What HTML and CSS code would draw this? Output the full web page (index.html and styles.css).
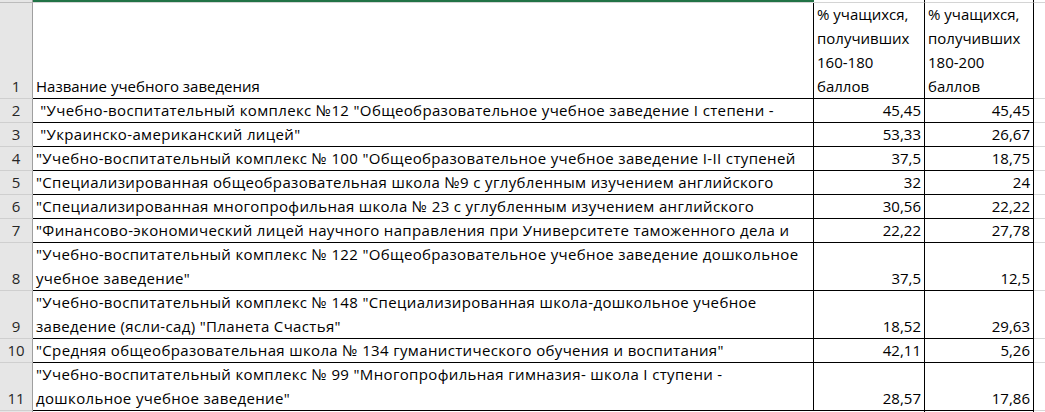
FILE: index.html
```html
<!DOCTYPE html>
<html lang="ru">
<head>
<meta charset="utf-8">
<title>Таблица</title>
<link rel="stylesheet" href="styles.css">
</head>
<body>
<div class="sheet">
  <div class="rh top"></div>
  <div class="top sel"></div>
  <div class="top col"></div>
  <div class="top col"></div>
  <div class="top extra"></div>

  <div class="rh">1</div>
  <div class="c txt"><span>Название учебного заведения</span></div>
  <div class="c txt"><span>% учащихся,</span><span>получивших</span><span>160-180</span><span>баллов</span></div>
  <div class="c txt"><span>% учащихся,</span><span>получивших</span><span>180-200</span><span>баллов</span></div>
  <div class="x"></div>

  <div class="rh">2</div>
  <div class="c txt long"><span> "Учебно-воспитательный комплекс №12 "Общеобразовательное учебное заведение І степени -</span></div>
  <div class="c num">45,45</div>
  <div class="c num">45,45</div>
  <div class="x"></div>

  <div class="rh">3</div>
  <div class="c txt long"><span> "Украинско-американский лицей"</span></div>
  <div class="c num">53,33</div>
  <div class="c num">26,67</div>
  <div class="x"></div>

  <div class="rh">4</div>
  <div class="c txt long"><span>"Учебно-воспитательный комплекс № 100 "Общеобразовательное учебное заведение І-ІІ ступеней</span></div>
  <div class="c num">37,5</div>
  <div class="c num">18,75</div>
  <div class="x"></div>

  <div class="rh">5</div>
  <div class="c txt long"><span>"Специализированная общеобразовательная школа №9 с углубленным изучением английского</span></div>
  <div class="c num">32</div>
  <div class="c num">24</div>
  <div class="x"></div>

  <div class="rh">6</div>
  <div class="c txt long"><span>"Специализированная многопрофильная школа № 23 с углубленным изучением английского</span></div>
  <div class="c num">30,56</div>
  <div class="c num">22,22</div>
  <div class="x"></div>

  <div class="rh">7</div>
  <div class="c txt long"><span>"Финансово-экономический лицей научного направления при Университете таможенного дела и</span></div>
  <div class="c num">22,22</div>
  <div class="c num">27,78</div>
  <div class="x"></div>

  <div class="rh">8</div>
  <div class="c txt long"><span>"Учебно-воспитательный комплекс № 122 "Общеобразовательное учебное заведение дошкольное</span><span>учебное заведение"</span></div>
  <div class="c num">37,5</div>
  <div class="c num">12,5</div>
  <div class="x"></div>

  <div class="rh">9</div>
  <div class="c txt long"><span>"Учебно-воспитательный комплекс № 148 "Специализированная школа-дошкольное учебное</span><span>заведение (ясли-сад) "Планета Счастья"</span></div>
  <div class="c num">18,52</div>
  <div class="c num">29,63</div>
  <div class="x"></div>

  <div class="rh">10</div>
  <div class="c txt long"><span>"Средняя общеобразовательная школа № 134 гуманистического обучения и воспитания"</span></div>
  <div class="c num">42,11</div>
  <div class="c num">5,26</div>
  <div class="x"></div>

  <div class="rh">11</div>
  <div class="c txt long"><span>"Учебно-воспитательный комплекс № 99 "Многопрофильная гимназия- школа І ступени -</span><span>дошкольное учебное заведение"</span></div>
  <div class="c num">28,57</div>
  <div class="c num">17,86</div>
  <div class="x"></div>

  <div class="rh end"></div>
  <div class="end"></div>
  <div class="end col"></div>
  <div class="end col"></div>
  <div class="end"></div>
</div>
</body>
</html>
```

FILE: styles.css
```css
html, body {
  margin: 0;
  padding: 0;
  background: #ffffff;
}

body {
  font-family: "Open Sans", "Noto Sans", "DejaVu Sans", sans-serif;
  font-size: 15px;
  color: #000;
  overflow: hidden;
}

.sheet {
  display: grid;
  grid-template-columns: 33px 781px 111px 109px 11px;
  grid-template-rows: 3px 96px repeat(6, 24px) 48px 48px 24px 48px 1fr;
  width: 1045px;
  height: 412px;
}

.sheet > div {
  box-sizing: border-box;
  min-width: 0;
}

.rh {
  background: #e6e6e6;
  border-right: 1px solid #9f9f9f;
  border-bottom: 1px solid #cfcfcf;
  display: flex;
  align-items: flex-end;
  justify-content: center;
  line-height: 24px;
  color: #262626;
}

.rh.top {
  border-bottom: 1px solid #bcbcbc;
}

.top {
  border-bottom: 1px solid #d4d4d4;
}

.top.sel {
  border-top: 2px solid #217346;
}

.top.col,
.end.col {
  border-right: 1px solid #000;
}

.c {
  border-right: 1px solid #000;
  border-bottom: 1px solid #000;
  display: flex;
  flex-direction: column;
  justify-content: flex-end;
  line-height: 24px;
  padding: 0 3px 0 3px;
  white-space: pre;
  overflow: hidden;
}

.c span {
  display: block;
}

.long {
  letter-spacing: 0.35px;
}

.num {
  align-items: flex-end;
  padding-right: 3px;
}

.x {
  border-bottom: 1px solid #d9d9d9;
}

.rh.end {
  border-bottom: none;
}
```
